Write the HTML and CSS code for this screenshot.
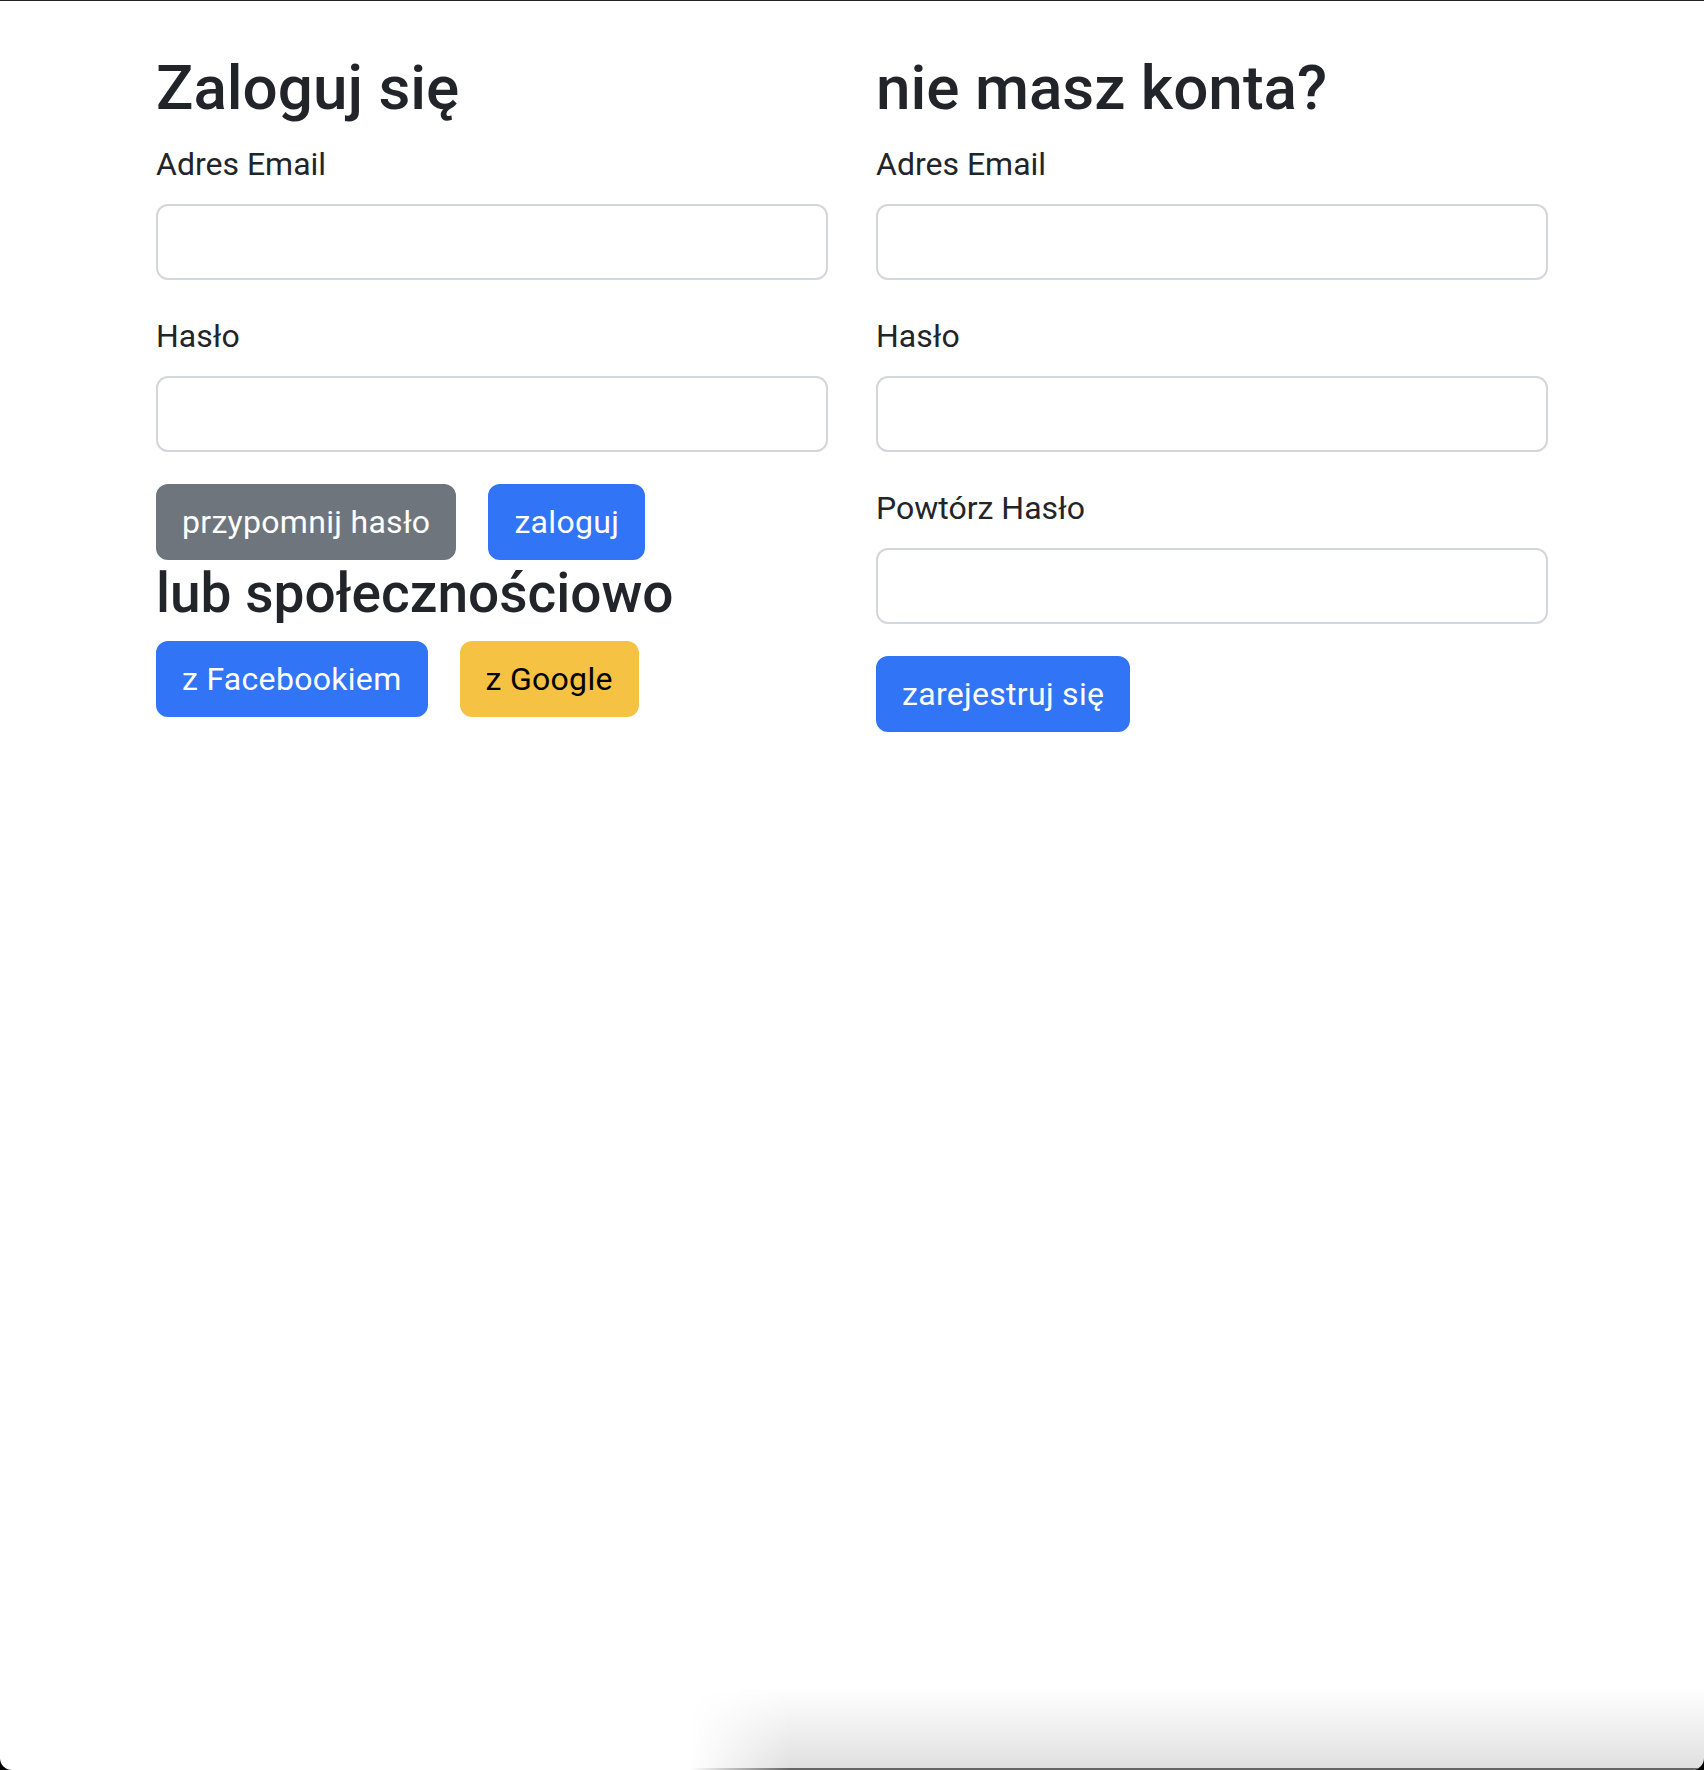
FILE: index.html
```html
<!DOCTYPE html>
<html lang="pl">
<head>
<meta charset="utf-8">
<title>Zaloguj się</title>
<link rel="stylesheet" href="styles.css">
</head>
<body>
<div class="window">
  <div class="container">
    <div class="row">
      <div class="col">
        <h2 class="title">Zaloguj się</h2>
        <label class="label">Adres Email</label>
        <input class="input" type="email">
        <label class="label">Hasło</label>
        <input class="input" type="password">
        <div class="btn-row">
          <button class="btn btn-gray">przypomnij hasło</button>
          <button class="btn btn-blue">zaloguj</button>
        </div>
        <h3 class="title title-social">lub społecznościowo</h3>
        <div class="btn-row">
          <button class="btn btn-blue">z Facebookiem</button>
          <button class="btn btn-yellow">z Google</button>
        </div>
      </div>
      <div class="col">
        <h2 class="title">nie masz konta?</h2>
        <label class="label">Adres Email</label>
        <input class="input" type="email">
        <label class="label">Hasło</label>
        <input class="input" type="password">
        <label class="label">Powtórz Hasło</label>
        <input class="input" type="password">
        <div class="btn-row">
          <button class="btn btn-blue">zarejestruj się</button>
        </div>
      </div>
    </div>
  </div>
  <div class="bottom-shadow"></div>
</div>
</body>
</html>
```
FILE: styles.css
```css
html, body {
  margin: 0;
  padding: 0;
  background: #000;
}
body {
  font-family: Roboto, "Liberation Sans", Arial, sans-serif;
  color: #212529;
}
.window {
  position: relative;
  box-sizing: border-box;
  min-height: 1770px;
  background: #fff;
  border-top: 1px solid #222;
  border-radius: 0 0 12px 12px;
  overflow: hidden;
}
.container {
  box-sizing: border-box;
  width: 1440px;
  margin: 0 auto;
  padding: 50px 24px 0;
}
.row {
  display: flex;
  margin: 0 -24px;
}
.col {
  box-sizing: border-box;
  flex: 0 0 50%;
  padding: 0 24px;
  display: flex;
  flex-direction: column;
  align-items: flex-start;
}
.title {
  margin: 0 0 15px;
  font-size: 62px;
  font-weight: 500;
  line-height: 1.2;
  color: #212529;
}
.title-social {
  font-size: 55px;
  margin-bottom: 15px;
}
.label {
  display: block;
  font-size: 32px;
  line-height: 48px;
  margin-bottom: 16px;
}
.input {
  box-sizing: border-box;
  display: block;
  width: 100%;
  height: 76px;
  margin: 0 0 32px;
  padding: 12px 24px;
  border: 2px solid #d3d7dc;
  border-radius: 12px;
  background: #fff;
  font-size: 32px;
  font-family: inherit;
}
.btn-row {
  display: flex;
  gap: 32px;
}
.btn {
  box-sizing: border-box;
  height: 76px;
  padding: 12px 24px;
  border: 2px solid transparent;
  border-radius: 12px;
  font-family: inherit;
  font-size: 32px;
  line-height: 48px;
  font-weight: 400;
  letter-spacing: 0.3px;
  color: #fff;
  cursor: pointer;
}
.btn-gray {
  background: #6e757c;
  border-color: #6e757c;
}
.btn-blue {
  background: #3174f5;
  border-color: #3174f5;
}
.btn-yellow {
  background: #f5c244;
  border-color: #f5c244;
  color: #000;
}
.bottom-shadow {
  position: absolute;
  left: 690px;
  right: 0;
  bottom: 0;
  height: 80px;
  background: linear-gradient(to bottom, rgba(0,0,0,0), rgba(0,0,0,0.12));
  -webkit-mask-image: linear-gradient(to right, transparent, #000 100px);
  mask-image: linear-gradient(to right, transparent, #000 100px);
  border-bottom: 2px solid #666;
}
```
